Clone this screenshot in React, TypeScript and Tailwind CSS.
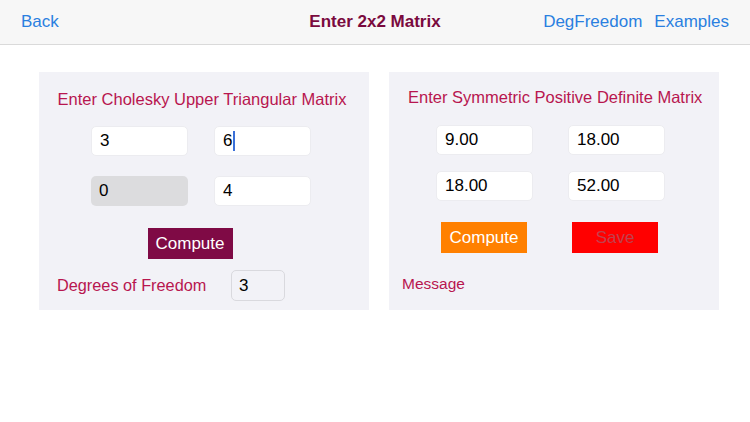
import React from "react";

const Cell = ({ value, disabled = false, caret = false }: { value: string; disabled?: boolean; caret?: boolean }) => (
  <div
    className={`flex items-center w-[97px] h-[30px] rounded-[5px] px-[8px] text-[17px] text-black ${
      disabled ? "bg-[#dcdcde]" : "bg-white border border-[#ececf0]"
    }`}
  >
    <span>{value}</span>
    {caret && <span className="w-[2px] h-[20px] bg-[#3a6fd8] ml-[1px]" />}
  </div>
);

export default function App() {
  return (
    <div className="w-[750px] h-[422px] bg-white font-['Liberation_Sans',Arial,sans-serif]">
      {/* nav bar */}
      <div className="flex items-center h-[45px] px-[21px] bg-[#f7f7f7] border-b border-[#dadada] text-[17px]">
        <div className="flex-1 text-[#2a7fe0]">Back</div>
        <div className="font-bold text-[#7a0a3e]">Enter 2x2 Matrix</div>
        <div className="flex-1 flex justify-end gap-[12px] text-[#2a7fe0]">
          <span>DegFreedom</span>
          <span>Examples</span>
        </div>
      </div>

      <div className="flex gap-[20px] pl-[39px] pt-[27px]">
        {/* cholesky */}
        <div className="w-[330px] h-[238px] bg-[#f2f2f7] flex flex-col items-center pt-[16px]">
          <div className="text-[16.5px] text-[#b8164f] leading-[22px] mr-[4px]">Enter Cholesky Upper Triangular Matrix</div>
          <div className="grid grid-cols-2 gap-x-[26px] gap-y-[20px] mt-[16px] mr-[6px]">
            <Cell value="3" />
            <Cell value="6" caret />
            <Cell value="0" disabled />
            <Cell value="4" />
          </div>
          <button className="mt-[22px] mr-[28px] w-[85px] h-[31px] bg-[#7f0a45] text-white text-[17px]">Compute</button>
          <div className="flex items-center self-start ml-[18px] mt-[11px]">
            <span className="text-[16.3px] text-[#b8164f] w-[174px]">Degrees of Freedom</span>
            <div className="flex items-center w-[54px] h-[31px] rounded-[5px] border border-[#d9d9de] px-[7px] text-[17px] text-black">3</div>
          </div>
        </div>

        {/* symmetric */}
        <div className="w-[330px] h-[238px] bg-[#f2f2f7] flex flex-col pt-[14px]">
          <div className="text-[16.5px] text-[#b8164f] leading-[22px] pl-[19px]">Enter Symmetric Positive Definite Matrix</div>
          <div className="grid grid-cols-[97px_97px] gap-x-[35px] gap-y-[16px] mt-[17px] ml-[47px]">
            <Cell value="9.00" />
            <Cell value="18.00" />
            <Cell value="18.00" />
            <Cell value="52.00" />
          </div>
          <div className="flex gap-[45px] mt-[21px] ml-[52px]">
            <button className="w-[86px] h-[31px] bg-[#ff8000] text-white text-[17px]">Compute</button>
            <button className="w-[86px] h-[31px] bg-[#ff0000] text-[#c2404e] text-[17px]">Save</button>
          </div>
          <div className="mt-[19px] pl-[13px] text-[15.5px] text-[#b8164f]">Message</div>
        </div>
      </div>
    </div>
  );
}
